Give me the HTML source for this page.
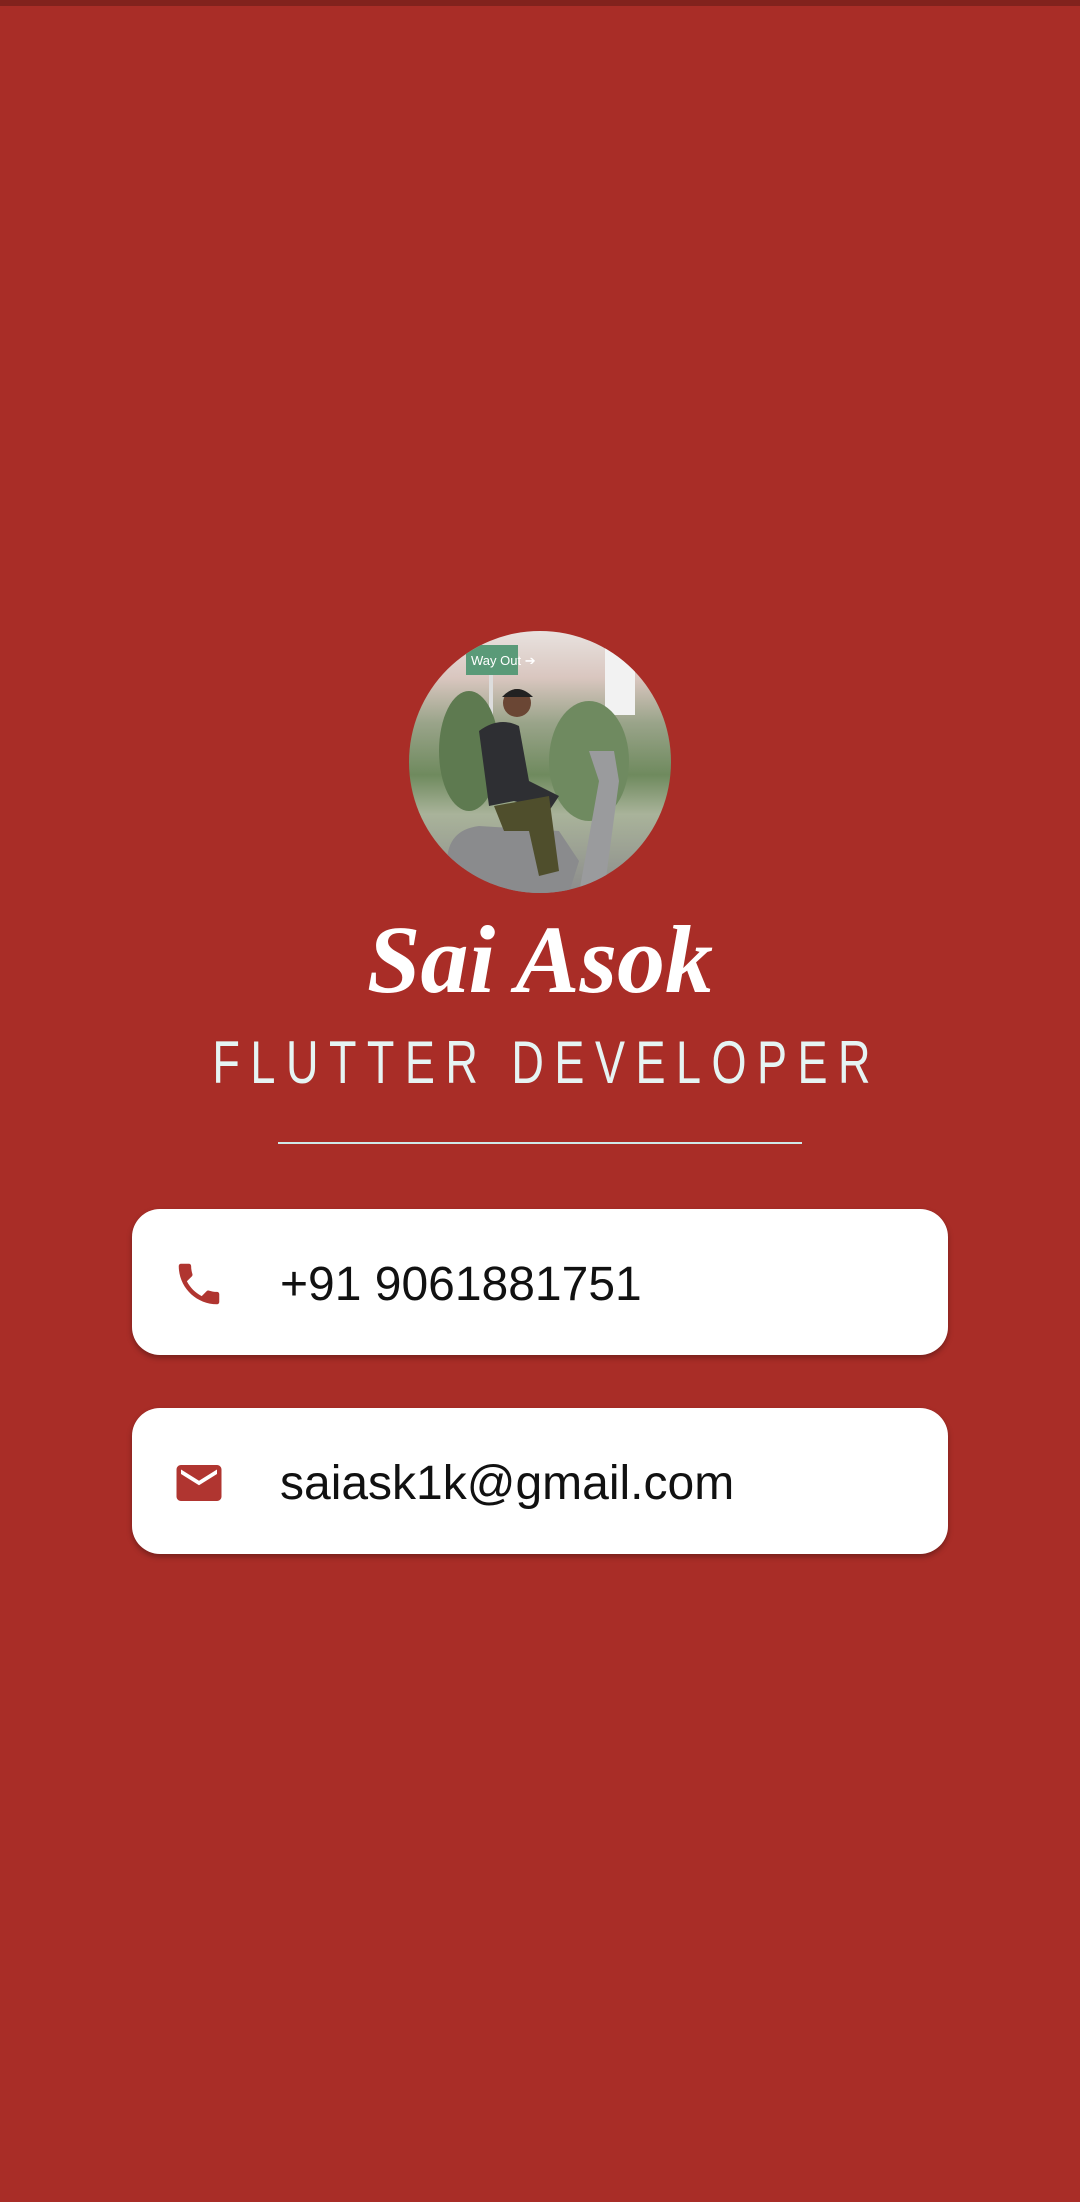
<!DOCTYPE html>
<html><head><meta charset="utf-8"><style>
html,body{margin:0;padding:0}
body{width:1080px;height:2202px;background:#a92d27;position:relative;overflow:hidden;font-family:"Liberation Sans",sans-serif}
.top{position:absolute;left:0;top:0;width:1080px;height:6px;background:#82221d}
.avatar{position:absolute;left:409px;top:631px;width:262px;height:262px;border-radius:50%;overflow:hidden;background:linear-gradient(180deg,#e8e2df 0%,#d9c6bf 18%,#9aa48a 35%,#6f8a5e 55%,#a9b39a 70%,#8c8c8c 100%)}
.name{position:absolute;left:0;width:1080px;top:900px;text-align:center;color:#fff;font-family:"Liberation Serif",serif;font-style:italic;font-weight:bold;font-size:96px;line-height:120px}
.title{position:absolute;left:7px;width:1080px;top:1030px;text-align:center;color:#e6f4f3;font-size:60px;line-height:66px}
.title span{display:inline-block;transform:scaleX(0.75);letter-spacing:14px;white-space:nowrap}
.line{position:absolute;left:278px;top:1142px;width:524px;height:2px;background:#cfe8e8}
.card{position:absolute;left:132px;width:816px;height:146px;background:#fff;border-radius:28px;box-shadow:0 3px 6px rgba(0,0,0,.3)}
.card svg{position:absolute;left:40px;top:48px}
.card .t{position:absolute;left:148px;top:3px;line-height:146px;font-size:48px;color:#111}
</style></head><body>
<div class="top"></div>
<div class="avatar">
<svg width="262" height="262" viewBox="0 0 262 262">
<rect x="57" y="14" width="52" height="30" fill="#5a9a78"/>
<text x="62" y="34" font-size="13" fill="#fff" font-family="Liberation Sans">Way Out ➔</text>
<rect x="80" y="44" width="4" height="70" fill="#ddd"/>
<rect x="196" y="14" width="30" height="70" fill="#f2f2f2"/>
<ellipse cx="60" cy="120" rx="30" ry="60" fill="#5e7a50"/>
<ellipse cx="180" cy="130" rx="40" ry="60" fill="#6f8a60"/>
<path d="M40 250 Q30 200 70 195 L150 200 L170 230 L160 262 L40 262Z" fill="#8a8b8d"/>
<path d="M180 120 L205 120 L210 150 L195 262 L170 262 L190 150Z" fill="#9a9b9d"/>
<path d="M70 100 Q90 85 110 95 L120 150 L150 165 L140 180 L105 170 L80 175 Z" fill="#2e2f33"/>
<path d="M85 175 L140 165 L150 240 L130 245 L120 200 L95 200Z" fill="#4f4e2c"/>
<circle cx="108" cy="72" r="14" fill="#6a4634"/>
<path d="M93 66 Q108 50 124 66Z" fill="#222"/>
</svg>
</div>
<div class="name">Sai Asok</div>
<div class="title"><span>FLUTTER DEVELOPER</span></div>
<div class="line"></div>
<div class="card" style="top:1209px">
<svg width="54" height="54" viewBox="0 0 24 24"><path fill="#b03530" d="M6.62 10.79c1.440 2.830 3.760 5.140 6.590 6.590l2.2-2.2c.27-.27.67-.36 1.020-.24 1.12.37 2.33.57 3.57.57.55 0 1 .45 1 1V20c0 .55-.45 1-1 1-9.39 0-17-7.61-17-17 0-.55.45-1 1-1h3.5c.55 0 1 .45 1 1 0 1.25.2 2.45.57 3.57.11.35.03.74-.25 1.02l-2.2 2.2z"/></svg>
<div class="t">+91 9061881751</div>
</div>
<div class="card" style="top:1408px">
<svg width="54" height="54" viewBox="0 0 24 24"><path fill="#b03530" d="M20 4H4c-1.1 0-1.99.9-1.99 2L2 18c0 1.1.9 2 2 2h16c1.1 0 2-.9 2-2V6c0-1.1-.9-2-2-2zm0 4l-8 5-8-5V6l8 5 8-5v2z"/></svg>
<div class="t">saiask1k@gmail.com</div>
</div>
</body></html>
